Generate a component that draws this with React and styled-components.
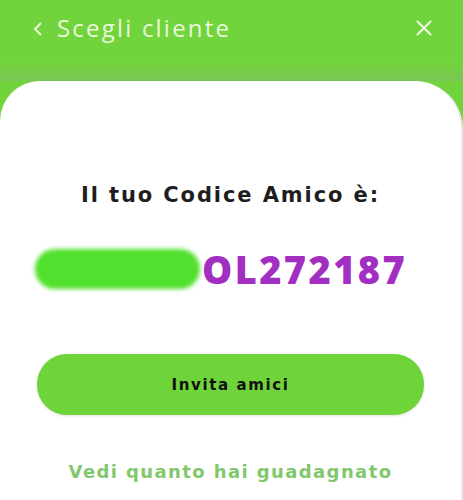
import styled, { createGlobalStyle } from "styled-components";

const GlobalStyle = createGlobalStyle`
  html, body {
    margin: 0;
    padding: 0;
    background: #72d43c;
    font-family: "DejaVu Sans", "Open Sans", sans-serif;
  }
`;

const Screen = styled.div`
  width: 463px;
  height: 500px;
  background: #72d43c;
  display: flex;
  flex-direction: column;
  overflow: hidden;
`;

const Header = styled.div`
  height: 81px;
  display: flex;
  align-items: flex-start;
  justify-content: space-between;
  padding: 11px 30px 0 32px;
  box-sizing: border-box;
  color: #e9f7dc;
  background: linear-gradient(to bottom, #72d43c 0px, #72d43c 62px, #7ac656 81px);
`;

const Back = styled.div`
  display: flex;
  align-items: center;
  gap: 13px;
  font-family: "Open Sans", sans-serif;
  font-size: 24px;
  font-weight: 400;
  letter-spacing: 2.2px;
`;

const IconBtn = styled.svg`
  display: block;
  margin-top: ${(p) => p.$top || 0}px;
`;

const Card = styled.div`
  flex: 1;
  background: #fff;
  border-radius: 40px 48px 0 0;
  display: flex;
  flex-direction: column;
  align-items: center;
  border-right: 2px solid #e8e8e8;
`;

const Title = styled.h2`
  margin: 102px 0 0;
  font-size: 21px;
  font-weight: 700;
  color: #1e1e1e;
  letter-spacing: 1.9px;
`;

const CodeRow = styled.div`
  margin-top: 36px;
  display: flex;
  align-items: center;
  align-self: flex-start;
  margin-left: 35px;
`;

const Blur = styled.div`
  width: 165px;
  height: 40px;
  border-radius: 20px;
  background: #52e02e;
  filter: blur(2px);
`;

const Code = styled.div`
  font-family: "Open Sans", sans-serif;
  font-size: 38px;
  font-weight: 800;
  color: #a22fc2;
  letter-spacing: 2.4px;
  margin-left: 2px;
`;

const Button = styled.button`
  margin-top: 59px;
  width: 387px;
  height: 61px;
  border: none;
  border-radius: 30px;
  background: #6fd43a;
  box-shadow: 0 1px 3px rgba(0, 0, 0, 0.12);
  font-family: inherit;
  font-size: 15px;
  font-weight: 700;
  letter-spacing: 1.6px;
  color: #111;
`;

const Link = styled.a`
  margin-top: 46px;
  font-size: 18px;
  font-weight: 700;
  letter-spacing: 1.4px;
  color: #80c86b;
`;

export default function App() {
  return (
    <>
      <GlobalStyle />
      <Screen>
        <Header>
          <Back>
            <IconBtn $top={2} width="12" height="16" viewBox="0 0 12 16">
              <path d="M9 2 L3 8 L9 14" fill="none" stroke="#e9f7dc" strokeWidth="2" />
            </IconBtn>
            Scegli cliente
          </Back>
          <IconBtn $top={8} width="18" height="18" viewBox="0 0 18 18">
            <path d="M2 2 L16 16 M16 2 L2 16" stroke="#e9f7dc" strokeWidth="2.4" />
          </IconBtn>
        </Header>
        <Card>
          <Title>Il tuo Codice Amico è:</Title>
          <CodeRow>
            <Blur />
            <Code>OL272187</Code>
          </CodeRow>
          <Button>Invita amici</Button>
          <Link>Vedi quanto hai guadagnato</Link>
        </Card>
      </Screen>
    </>
  );
}
